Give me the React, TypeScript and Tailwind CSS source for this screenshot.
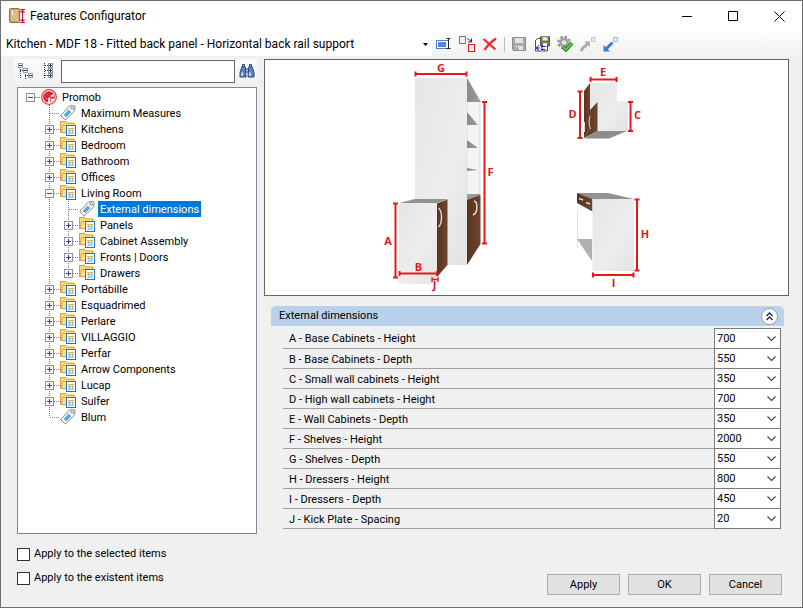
import React, { useState } from "react";

type Kind = "root" | "tag" | "folder";
type Node = { label: string; kind: Kind; open?: boolean; children?: Node[] };

const folder = (label: string): Node => ({ label, kind: "folder" });

const children: Node[] = [
  { label: "Maximum Measures", kind: "tag" },
  folder("Kitchens"),
  folder("Bedroom"),
  folder("Bathroom"),
  folder("Offices"),
  {
    label: "Living Room",
    kind: "folder",
    open: true,
    children: [
      { label: "External dimensions", kind: "tag" },
      folder("Panels"),
      folder("Cabinet Assembly"),
      folder("Fronts | Doors"),
      folder("Drawers"),
    ],
  },
  folder("Portábille"),
  folder("Esquadrimed"),
  folder("Perlare"),
  folder("VILLAGGIO"),
  folder("Perfar"),
  folder("Arrow Components"),
  folder("Lucap"),
  folder("Sulfer"),
  { label: "Blum", kind: "tag" },
];

const dimensions: [string, string][] = [
  ["A - Base Cabinets - Height", "700"],
  ["B - Base Cabinets - Depth", "550"],
  ["C - Small wall cabinets - Height", "350"],
  ["D - High wall cabinets - Height", "700"],
  ["E - Wall Cabinets - Depth", "350"],
  ["F - Shelves - Height", "2000"],
  ["G - Shelves - Depth", "550"],
  ["H - Dressers - Height", "800"],
  ["I - Dressers - Depth", "450"],
  ["J - Kick Plate - Spacing", "20"],
];

function NodeIcon({ kind }: { kind: Kind }) {
  if (kind === "root")
    return (
      <svg className="h-4 w-4 shrink-0" viewBox="0 0 16 16">
        <circle cx="8" cy="8" r="7.300" fill="#fff" stroke="#e0303a" strokeWidth="1.200" />
        <circle cx="8" cy="8" r="5.800" fill="#d81e2c" />
        <path d="M7.500 8.500h1.800V14c-1 .3-1.800.2-2.600 0zM9.500 6.500l3-1.500.8 2.500-3.500.5z" fill="#fff" />
        <path d="M5 4.500l2 2M3.500 8l2 .5M5 11l1.500-2" stroke="#f0929a" strokeWidth=".7" />
        <path d="M10 9.500h3.300c-.4 2-1.600 3.300-3.300 4z" fill="#fff" />
      </svg>
    );
  if (kind === "tag")
    return (
      <svg className="h-4 w-4 shrink-0" viewBox="0 1 16 16">
        <path d="M1 11L9.500 2l4.800-.9 1 1-.9 5L6 15.300H4.500L1 12z" fill="#f4f4f4" stroke="#8d8d8d" strokeWidth="1" />
        <path d="M3.800 11L8.500 5.800l2.500 2.200-4.800 5z" fill="#3c9ad6" />
        <path d="M4.800 11.600l4.600-4.900" stroke="#9fd0ee" strokeWidth=".7" />
        <circle cx="12.300" cy="4" r="1.300" fill="#fff" stroke="#777" strokeWidth=".8" />
      </svg>
    );
  return (
    <svg className="h-4 w-4 shrink-0" viewBox="0 1 16 16">
      <path d="M.5 12.500v-11h5l1 1.500h7.500v9.500z" fill="#fbdc7c" stroke="#d69a3a" />
      <path d="M.8 12.700l2-7.200h12.400l-1.500 7.200z" fill="#fbe08c" stroke="#d69a3a" strokeWidth=".9" />
      <rect x="6.500" y="5.500" width="9" height="10" fill="#fff" stroke="#0f7fc4" />
      <path d="M8 10.500h6M8 13h6M9.700 8v6M12.400 8v6" stroke="#8fb9dc" strokeWidth="1" />
      <path d="M8 8.500h6" stroke="#f2b14a" />
    </svg>
  );
}

function Guide({ up, down, across }: { up?: boolean; down?: boolean; across?: boolean }) {
  return (
    <svg className="absolute inset-0 h-4 w-[19px]" viewBox="0 0 19 16" stroke="#7d7d7d" strokeDasharray="1 1" shapeRendering="crispEdges">
      {up && <path d="M9.500 0v8" />}
      {down && <path d="M9.500 8v8" />}
      {across && <path d="M10 8.500h9" />}
    </svg>
  );
}

function Expander({ open, toggle, label }: { open: boolean; toggle: () => void; label: string }) {
  return (
    <button type="button" aria-label={label} onClick={toggle} className="relative h-[9px] w-[9px]">
      <svg className="block h-[9px] w-[9px]" viewBox="0 0 9 9" shapeRendering="crispEdges">
        <rect x=".5" y=".5" width="8" height="8" fill="#f8f8f8" stroke="#919191" />
        <path d={open ? "M2 4.500h5" : "M2 4.500h5M4.500 2v5"} stroke="#34479c" />
      </svg>
    </button>
  );
}

function TreeItem(props: {
  node: Node;
  trail: boolean[];
  last: boolean;
  top?: boolean;
  selected: string;
  select: (s: string) => void;
}) {
  const { node, trail, last, top, selected, select } = props;
  const [open, setOpen] = useState(!!node.open);
  const active = selected === node.label;
  return (
    <li role="treeitem" aria-selected={active}>
      <div className="flex h-4 items-center">
        {trail.map((more, i) => (
          <span key={i} className="relative h-4 w-[19px] shrink-0">
            {more && <Guide up down />}
          </span>
        ))}
        <span className="relative mr-px flex h-4 w-[19px] shrink-0 items-center justify-center">
          <Guide up={!top} down={!last && !top} across />
          {node.kind !== "tag" && <Expander open={open} toggle={() => setOpen(!open)} label={"Toggle " + node.label} />}
        </span>
        <NodeIcon kind={node.kind} />
        <button
          type="button"
          onClick={() => select(node.label)}
          className={"ml-[3px] h-4 px-[2px] pt-px leading-[15px] whitespace-pre " + (active ? "bg-[#0078d7] text-white" : "")}
        >
          {node.label}
        </button>
      </div>
      {open && node.children && (
        <ul role="group">
          {node.children.map((c, i) => (
            <TreeItem
              key={c.label}
              node={c}
              trail={[...trail, !last]}
              last={i === node.children!.length - 1}
              selected={selected}
              select={select}
            />
          ))}
        </ul>
      )}
    </li>
  );
}

function Tool({ label, children, disabled }: { label: string; children: React.ReactNode; disabled?: boolean }) {
  return (
    <button type="button" aria-label={label} disabled={disabled} className="flex h-[23px] w-[23px] shrink-0 items-center justify-center">
      <svg className="h-4 w-4" viewBox="0 0 16 16">
        {children}
      </svg>
    </button>
  );
}

function Measure({ d }: { d: string }) {
  return <path d={d} stroke="#e81818" strokeWidth="2" fill="none" />;
}

function Cabinets() {
  return (
    <svg className="block h-auto w-full" viewBox="265 60 523 235" role="img" aria-label="Cabinet dimensions diagram">
      <defs>
        <linearGradient id="side" x1="0" y1="0" x2="1" y2="1">
          <stop offset="0" stopColor="#e6e6e6" />
          <stop offset=".6" stopColor="#ededed" />
          <stop offset="1" stopColor="#e2e2e2" />
        </linearGradient>
        <linearGradient id="wood" x1="0" y1="0" x2="1" y2="0">
          <stop offset="0" stopColor="#57331f" />
          <stop offset="1" stopColor="#704530" />
        </linearGradient>
        <linearGradient id="shade" x1="0" y1="0" x2="1" y2="0">
          <stop offset="0" stopColor="#8a8a8a" />
          <stop offset="1" stopColor="#a0a0a0" />
        </linearGradient>
      </defs>
      <path d="M467 78l13 24v92l-13 6z" fill="#f4f4f4" stroke="#c8c8c8" strokeWidth=".6" />
      <path d="M467 78l14 24h-14z" fill="url(#shade)" />
      <path d="M467 112l11 13h-11zM467 140l11 8h-11zM467 168l11 2-11 1z" fill="url(#shade)" />
      <path d="M467 194h13v4l-13 4z" fill="#999" />
      <path d="M415 78h52v187h-52z" fill="url(#side)" />
      <path d="M467 200l13.500-5v49L467 265z" fill="url(#wood)" />
      <path d="M474 201c4 1 4 12-1 14" fill="none" stroke="#ddd" strokeWidth="1.400" />
      <path d="M399 203l16-4h33l-11 4z" fill="#8f9391" />
      <path d="M437 203.500l10.500-4V265L437 277z" fill="url(#wood)" />
      <path d="M438.500 208c4 3 4 15 0 19" fill="none" stroke="#ddd" strokeWidth="1.400" />
      <path d="M399 203h38v74l-5 7h-33z" fill="url(#side)" />

      <path d="M584 91l6-8v46l-6 9z" fill="url(#wood)" />
      <path d="M590 83h27v18h11v30h-38z" fill="url(#side)" />
      <path d="M590 110l7.500-8v29L584 138l6-9z" fill="url(#wood)" />
      <path d="M590.500 116c-2.500 4-1 10 0 13M584.500 122v10" stroke="#ddd" strokeWidth="1" fill="none" />
      <path d="M597 131h30l-18 7.500h-25z" fill="#8d8d8d" />

      <path d="M577 193h31l26 6h-42z" fill="#8f9391" />
      <path d="M577.500 210v38" stroke="#e2e2e2" />
      <path d="M577 239h15v22z" fill="#b0b0b0" />
      <path d="M577 193l15.500 6v12.500L577 203z" fill="url(#wood)" />
      <path d="M579 198.500l4 1.500M586 202.500l4 1.500" stroke="#ddd" strokeWidth="1.400" />
      <path d="M592.500 199H634v72h-41.500z" fill="url(#side)" />

      <Measure d="M415 74h52M415.500 71.500v5M466.500 71.500v5" />
      <Measure d="M484.500 101.500v142M482 102h5M482 243.500h5" />
      <Measure d="M395.500 203v75M393 203.500h5M393 277.500h5" />
      <Measure d="M399 273.500h38M399.500 271v5M437 271v5" />
      <path d="M432 279.500h6M432 277v5M438 277v5" stroke="#e81818" strokeWidth="1.300" />
      <Measure d="M590 79.500h27M590.500 77v5M616.500 77v5" />
      <Measure d="M580 91.500v47M577.500 91.500h5M577.500 138h5" />
      <Measure d="M630.500 101.500v30M628 102h5M628 131h5" />
      <Measure d="M637 199.500v71M634.500 199.500h5M634.500 270.500h5" />
      <Measure d="M592.500 275h41M593 272.500v5M633.500 272.500v5" />
      <g fill="#e01818" fontFamily="'Open Sans', sans-serif" fontWeight="700" fontSize="11" textAnchor="middle">
        <text x="441" y="72">G</text>
        <text x="490.500" y="176">F</text>
        <text x="388" y="245">A</text>
        <text x="418.500" y="271">B</text>
        <text x="434.500" y="289">J</text>
        <text x="603" y="76">E</text>
        <text x="572.500" y="118">D</text>
        <text x="637.500" y="119">C</text>
        <text x="645" y="238">H</text>
        <text x="613.500" y="287">I</text>
      </g>
    </svg>
  );
}

export default function App() {
  const [selected, setSelected] = useState("External dimensions");
  const [expanded, setExpanded] = useState(true);
  return (
    <div className="flex min-h-screen flex-col border border-[#6e6e6e] bg-[#f0f0f0] font-['Roboto',sans-serif] text-[11px] text-black">
      <header className="flex h-[30px] items-center bg-white pl-2">
        <svg className="mr-1 h-4 w-[17px]" viewBox="0 0 17 16">
          <rect x=".5" y=".5" width="10" height="14" rx="1" fill="#cfa878" stroke="#8a6b48" />
          <rect x="2" y="2" width="7" height="11" fill="#dcba8c" />
          <path d="M3.500 3v4" stroke="#fff" />
          <path d="M13.500 2v12M11 1.500h5M11 14.500h5M11.500 4.500l2-2 2 2M11.500 11.500l2 2 2-2" stroke="#e0182d" strokeWidth="1.200" fill="none" />
        </svg>
        <h1 className="flex-1 text-[12px]">Features Configurator</h1>
        <button type="button" aria-label="Minimize" className="flex h-full w-[46px] items-center justify-center">
          <svg className="h-[11px] w-[11px]" viewBox="0 0 11 11"><path d="M0 5.500h10" stroke="#000" /></svg>
        </button>
        <button type="button" aria-label="Maximize" className="flex h-full w-[46px] items-center justify-center">
          <svg className="h-[11px] w-[11px]" viewBox="0 0 11 11"><path d="M.5.5h9v9h-9z" fill="none" stroke="#000" /></svg>
        </button>
        <button type="button" aria-label="Close" className="flex h-full w-[46px] items-center justify-center">
          <svg className="h-[11px] w-[11px]" viewBox="0 0 11 11"><path d="M.5.5l10 10M10.500.5l-10 10" stroke="#000" /></svg>
        </button>
      </header>

      <div className="flex h-[26px] items-center bg-linear-to-b from-[#fdfdfd] to-[#f0f0f0]" role="toolbar">
        <div className="relative flex h-[24px] w-[431px] items-center bg-white">
          <select aria-label="Configuration" className="h-full w-full appearance-none bg-transparent pl-[5px] text-[12px]">
            <option>Kitchen - MDF 18 - Fitted back panel - Horizontal back rail support</option>
          </select>
          <svg className="pointer-events-none absolute right-1 h-[3px] w-[5px]" viewBox="0 0 5 3"><path d="M0 0h5L2.500 3z" /></svg>
        </div>
        <Tool label="Rename">
          <rect x=".5" y="4.500" width="12" height="8" fill="#fff" stroke="#5f7fb0" />
          <rect x="2" y="6" width="8" height="5" fill="#4c86e8" />
          <path d="M10.500 2.500h4M12.500 2.500v10M10.500 12.500h4" stroke="#222" />
        </Tool>
        <Tool label="Duplicate">
          <rect x=".5" y=".5" width="6" height="7" fill="#eee" stroke="#807878" />
          <path d="M8.500 2.500l4 3M12.500 2.500v3.500h-3.500" stroke="#1a237e" fill="none" />
          <rect x="9.500" y="8.500" width="6" height="7" fill="#fff" stroke="#f01010" />
        </Tool>
        <Tool label="Delete">
          <path d="M1.500 3l4 3.500 8 7M14 2.500C9 6 5 10 2.500 14" stroke="#ec2c34" strokeWidth="2.300" fill="none" />
        </Tool>
        <span className="mr-[2px] ml-[3px] h-[15px] w-px shrink-0 bg-[#bdbdbd]" />
        <Tool label="Save" disabled>
          <path d="M1.500 1.500h13v13h-12l-1-1z" fill="#a9a9a9" stroke="#8c8c8c" />
          <path d="M4 2h8v5H4zM5 10h7v4H5z" fill="#e4e4e4" />
          <path d="M6.500 11v3" stroke="#888" strokeWidth="1.500" />
        </Tool>
        <Tool label="Save as">
          <path d="M1.500 4.500l2-2h10v12.500h-12z" fill="#fff" stroke="#4c4c4c" />
          <path d="M6.500.8h9v9.200h-9z" fill="#77774f" stroke="#444430" strokeWidth=".8" />
          <path d="M8.500 1.200h5v3.300h-5zM9 7h4v3H9z" fill="#eee" />
          <path d="M5 9.500L2 12l3 2.500M2.500 12H6M7 10.500h4.500M7 12h2M7 13.500h4.500" stroke="#1010e0" strokeWidth="1" fill="none" />
        </Tool>
        <Tool label="Apply settings">
          <circle cx="7" cy="6.500" r="5.800" fill="none" stroke="#8f8f8f" strokeWidth="2" strokeDasharray="2.500 2.050" />
          <circle cx="7" cy="6.500" r="3.600" fill="#e8e8e8" stroke="#a2a2a2" strokeWidth="2.600" />
          <path d="M5.500 10.500l3.500 3.200L15 7" fill="none" stroke="#257a22" strokeWidth="3.800" />
          <path d="M5.500 10.500l3.500 3.200L15 7" fill="none" stroke="#58cf48" strokeWidth="2" />
        </Tool>
        <Tool label="Export" disabled>
          <path d="M1 15l3-4.500M3 12l5-4.500" stroke="#aaa" strokeWidth="3" />
          <path d="M4.500 5.500H10V11z" fill="#aaa" />
          <path d="M11.500 1.500h3.500v4h-3.500z" fill="#eee" stroke="#c4c4c4" />
        </Tool>
        <Tool label="Import">
          <path d="M3 13l6.500-6.500" stroke="#3a7bd0" strokeWidth="3" />
          <path d="M.5 9v6.500H7z" fill="#3a7bd0" />
          <path d="M10.500 1.500h4v4h-4z" fill="#e4eefb" stroke="#9db9de" />
        </Tool>
      </div>

      <main className="flex flex-1 pt-[2px] pr-[13px] pl-[13px]">
        <section className="flex w-[243px] shrink-0 flex-col">
          <div className="mb-1 flex h-[24px] items-center bg-linear-to-b from-[#fcfcfc] to-[#f2f2f2]">
            <Tool label="Collapse all">
              <g shapeRendering="crispEdges" fill="none">
                <path d="M2.500 4v12M2 7.500h3M7.500 9v7M7 12.500h4" stroke="#333" strokeDasharray="1 1" />
                <path d="M.5.5h4v4h-4zM5.500 5.500h4v4h-4zM10.500 10.500h4v4h-4z" fill="#fff" stroke="#8a9aa8" />
                <path d="M1 2.500h3M6 7.500h3M11 12.500h3" stroke="#334" />
              </g>
            </Tool>
            <Tool label="Expand all">
              <g shapeRendering="crispEdges" fill="none">
                <path d="M3.500 0v16M4 2.500h4M4 7.500h4M4 12.500h4" stroke="#333" strokeDasharray="1 1" />
                <path d="M7.500.5h4v4h-4zM7.500 5.500h4v4h-4zM7.500 10.500h4v4h-4z" fill="#fff" stroke="#8a9aa8" />
                <path d="M8 2.500h3M8 7.500h3M8 12.500h3M9.500 1v3M9.500 6v3M9.500 11v3" stroke="#334" />
              </g>
            </Tool>
            <input aria-label="Search features" className="ml-px h-[23px] w-[174px] shrink-0 border border-[#646464] bg-white px-1 outline-none" />
            <Tool label="Find">
              <path d="M3 3.500h3l.5 3 .5 7.500H1V9.500zM10 3.500h3l2 6V14H9l.5-7.500z" fill="#5f86c4" stroke="#24457f" />
              <path d="M3.500 1.500h2v2h-2zM10.500 1.500h2v2h-2zM6.500 6h3v3h-3z" fill="#b5cbec" stroke="#24457f" />
              <path d="M3 9.500V13M11 9.500V13" stroke="#dbe8fa" strokeWidth="1.500" />
            </Tool>
          </div>
          <div className="ml-[3px] flex-1 border border-[#828790] bg-white pt-px pl-[3px]">
            <ul role="tree" aria-label="Features">
              <TreeItem node={{ label: "Promob", kind: "root", open: true, children }} trail={[]} last top selected={selected} select={setSelected} />
            </ul>
          </div>
        </section>

        <section className="ml-[7px] min-w-0 flex-1">
          <div className="border border-[#646464] bg-white">
            <Cabinets />
          </div>
          <div className="mt-[10px] mr-[5px] ml-[7px] flex h-[20px] items-center justify-between rounded-t-[5px] bg-[#b9d1ea] pr-[6px] pl-2">
            <h2 className="pt-px">External dimensions</h2>
            <button
              type="button"
              aria-label="Collapse group"
              onClick={() => setExpanded(!expanded)}
              className="flex h-[17px] w-[17px] items-center justify-center rounded-full border border-[#8f98a8] bg-white"
            >
              <svg className="h-[9px] w-[9px]" viewBox="0 0 9 9" fill="none" stroke="#1c2c50" strokeWidth="1.400">
                <path d="M1.500 4l3-3 3 3M1.500 8l3-3 3 3" />
              </svg>
            </button>
          </div>
          {expanded && (
            <div className="mt-[2px] mr-2 ml-[19px]">
              {dimensions.map(([label, value], i) => (
                <div key={label} className="flex h-[20px] items-stretch first:h-[21px]">
                  <label htmlFor={"dim" + i} className="flex flex-1 items-center border-b border-[#a0a0a0] pt-[3px] pl-[6px]">
                    {label}
                  </label>
                  <div className={"relative flex w-[67px] items-center border-x border-b border-[#7a7a7a] bg-white " + (i === 0 ? "border-t" : "")}>
                    <select id={"dim" + i} className="h-full w-full appearance-none bg-transparent pt-px pl-[2px]">
                      <option>{value}</option>
                    </select>
                    <svg className="pointer-events-none absolute right-1 h-[5px] w-[9px]" viewBox="0 0 9 5" fill="none" stroke="#444" strokeWidth="1.100">
                      <path d="M.5.5l4 4 4-4" />
                    </svg>
                  </div>
                </div>
              ))}
            </div>
          )}
        </section>
      </main>

      <footer className="flex justify-between pt-2 pr-[20px] pl-4">
        <div className="pb-[17px]">
          {["Apply to the selected items", "Apply to the existent items"].map((t) => (
            <label key={t} className="flex h-6 items-center gap-1">
              <input type="checkbox" className="h-[13px] w-[13px] appearance-none border border-[#333] bg-white checked:bg-[#0078d7]" />
              <span className="pt-px">{t}</span>
            </label>
          ))}
        </div>
        <div className="flex items-end gap-2 pb-[12px]">
          {["Apply", "OK", "Cancel"].map((t) => (
            <button key={t} type="button" className="h-[21px] w-[73px] border border-[#adadad] bg-[#e1e1e1] pt-px">
              {t}
            </button>
          ))}
        </div>
      </footer>
    </div>
  );
}
